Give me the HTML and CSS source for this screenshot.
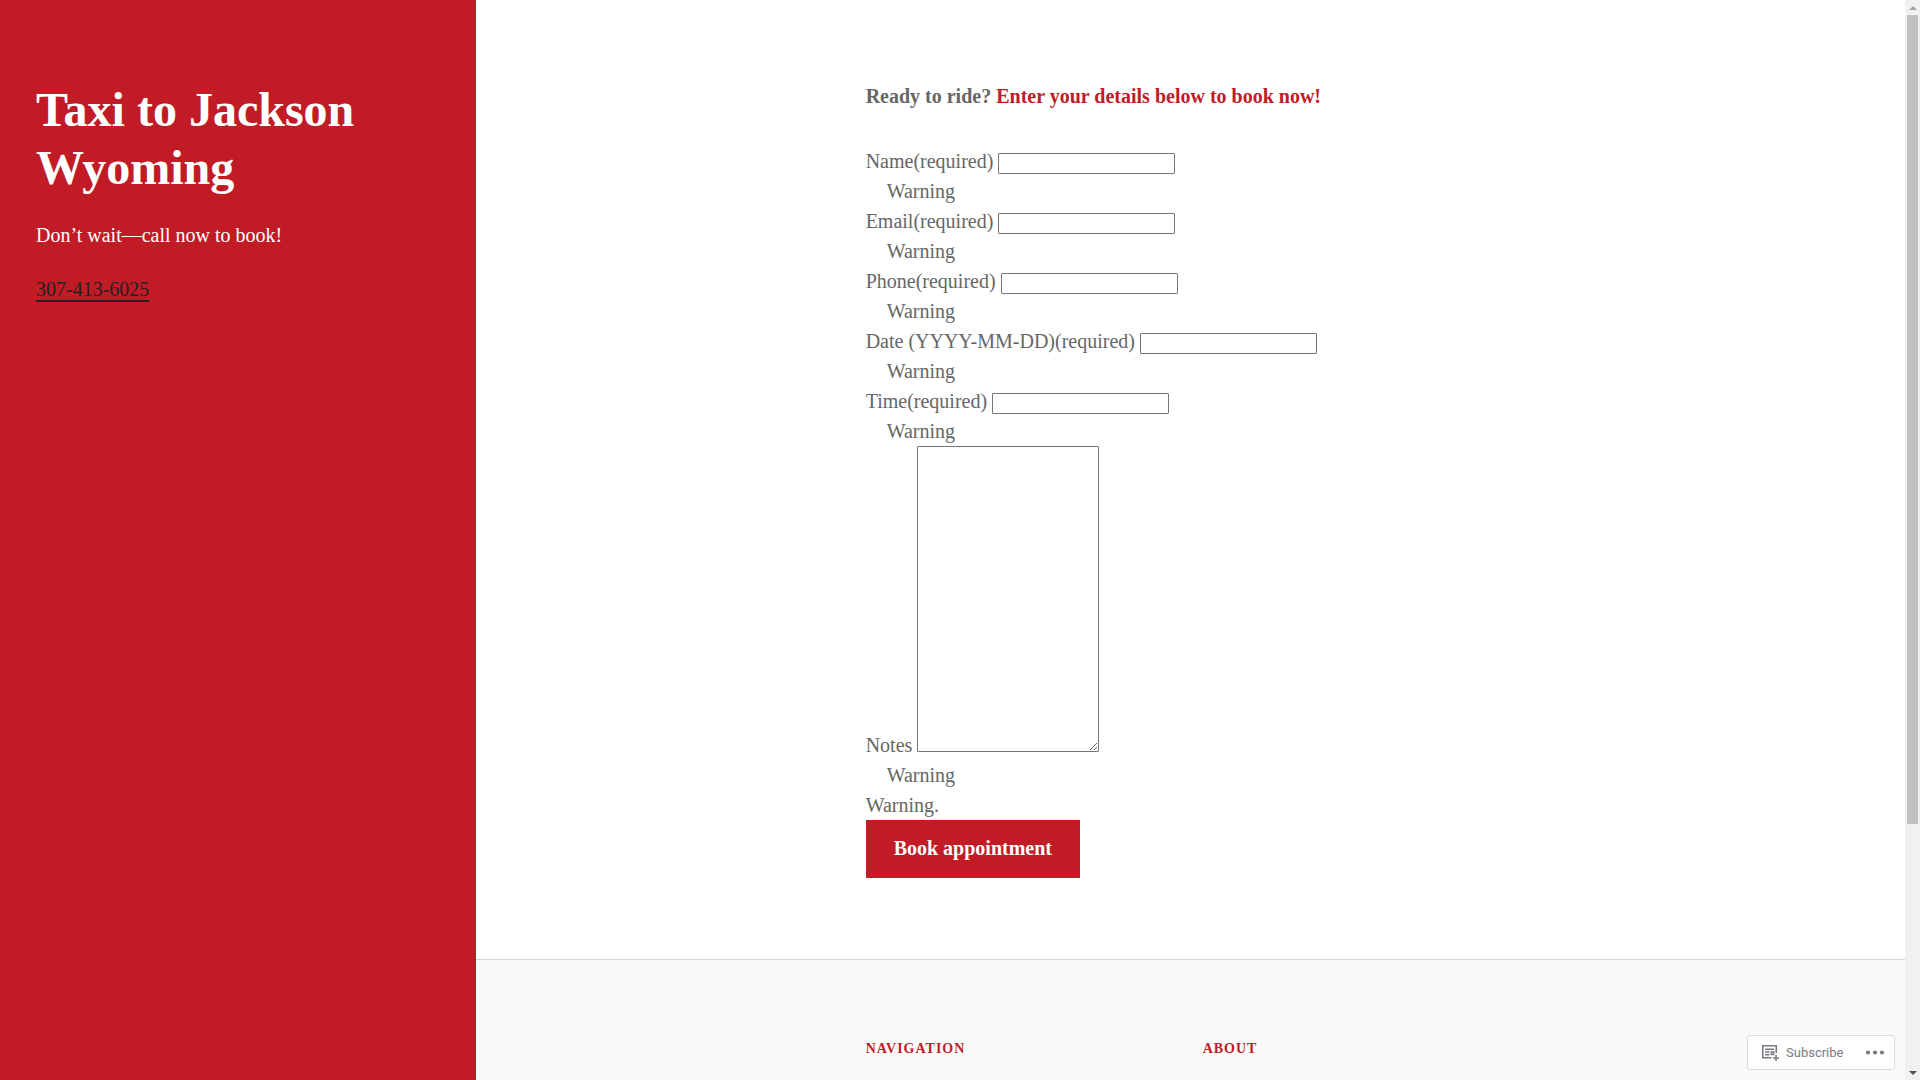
FILE: index.html
```html
<!DOCTYPE html>
<html lang="en">
<head>
	<meta charset="UTF-8">
	<meta name="viewport" content="width=device-width, initial-scale=1.0">
	<title>Taxi to Jackson Wyoming</title>
	<link rel="stylesheet" href="styles.css">
</head>
<body>

<div class="site">

	<header class="sidebar">
		<h1>Taxi to Jackson Wyoming</h1>
		<p>Don’t wait—call now to book!</p>
		<p><a href="tel:3074136025">307-413-6025</a></p>
	</header>

	<div class="content">

		<main class="booking">
			<div class="column">
				<p class="intro"><strong>Ready to ride? <span class="accent">Enter your details below to book now!</span></strong></p>

				<form>
					<div class="field">
						<label for="name">Name<span>(required)</span></label>
						<input type="text" id="name" name="name">
						<div class="field-error">Warning</div>
					</div>
					<div class="field">
						<label for="email">Email<span>(required)</span></label>
						<input type="email" id="email" name="email">
						<div class="field-error">Warning</div>
					</div>
					<div class="field">
						<label for="phone">Phone<span>(required)</span></label>
						<input type="tel" id="phone" name="phone">
						<div class="field-error">Warning</div>
					</div>
					<div class="field">
						<label for="date">Date (YYYY-MM-DD)<span>(required)</span></label>
						<input type="text" id="date" name="date">
						<div class="field-error">Warning</div>
					</div>
					<div class="field">
						<label for="time">Time<span>(required)</span></label>
						<input type="text" id="time" name="time">
						<div class="field-error">Warning</div>
					</div>
					<div class="field">
						<label for="notes">Notes</label>
						<textarea id="notes" name="notes" rows="20"></textarea>
						<div class="field-error">Warning</div>
					</div>
					<div class="form-error">Warning.</div>
					<button type="submit" class="button">Book appointment</button>
				</form>
			</div>
		</main>

		<footer class="footer">
			<div class="column footer-columns">
				<h2>Navigation</h2>
				<h2>About</h2>
			</div>
		</footer>

	</div>

</div>

<div class="scrollbar" aria-hidden="true">
	<span class="arrow arrow-up"></span>
	<span class="track"><span class="thumb"></span></span>
	<span class="arrow arrow-down"></span>
</div>

<div class="actionbar">
	<button type="button" class="subscribe">
		<svg width="18" height="19" viewBox="0 0 18 19" fill="none" stroke="currentColor">
			<path d="M10.500 14.750H1.750V2.750H15.250V10" stroke-width="1.600"/>
			<path d="M4 6.250H13M4 9H8.500M4 11.750H8.500" stroke-width="1.400"/>
			<path d="M15 12V18M12 15H18" stroke-width="1.600"/>
			<path d="M10.250 9H12.750V11.500H10.250Z" stroke-width="1.400"/>
		</svg>
		Subscribe
	</button>
	<button type="button" class="more" aria-label="More">
		<svg width="20" height="7" viewBox="0 0 20 7" fill="currentColor">
			<circle cx="3" cy="3.500" r="2.100"/>
			<circle cx="10" cy="3.500" r="2.100"/>
			<circle cx="17" cy="3.500" r="2.100"/>
		</svg>
	</button>
</div>

</body>
</html>
```
FILE: styles.css
```css
* {
	box-sizing: border-box;
}
body {
	display: flex;
	height: 100vh;
	margin: 0;
	font-family: "Liberation Serif", "Times New Roman", serif;
	font-size: 20px;
	line-height: 30px;
	color: #666;
	background: #fff;
}
h1, h2, p {
	margin: 0;
}
.site {
	display: grid;
	grid-template-columns: 1fr 3fr;
	flex: 1;
	overflow-y: auto;
	scrollbar-width: none;
}

/* sidebar */
.sidebar {
	padding: 81px 36px;
	background: #c11b26;
	color: #fff;
}
.sidebar h1 {
	margin-bottom: 23px;
	font-size: 48px;
	line-height: 58px;
}
.sidebar p {
	margin-bottom: 24px;
}
.sidebar a {
	color: #222;
	text-decoration: underline;
	text-decoration-thickness: 2px;
	text-underline-offset: 4px;
}

/* booking form */
.booking {
	padding: 81px 24px;
}
.column {
	max-width: 650px;
	margin: 0 auto;
}
.intro {
	margin-bottom: 35px;
}
.accent {
	color: #c11b26;
}
.field input,
.field textarea {
	border: 1px solid #767676;
	border-radius: 1px;
}
.field input {
	width: 177px;
	padding: 2px 3px;
}
.field-error {
	padding-left: 21px;
}
.button {
	display: block;
	padding: 13px 28px 15px;
	border: 0;
	background: #c11b26;
	color: #fff;
	font: inherit;
	font-weight: bold;
	cursor: pointer;
}

/* footer */
.footer {
	min-height: 444px;
	padding: 79px 24px;
	border-top: 1px solid #d6d6d6;
	background: #fafafa;
}
.footer-columns {
	display: grid;
	grid-template-columns: 1fr 1fr;
	gap: 24px;
}
.footer h2 {
	font-size: 14px;
	line-height: 20px;
	letter-spacing: 1px;
	text-transform: uppercase;
	color: #c11b26;
}

/* scrollbar */
.scrollbar {
	display: flex;
	flex-direction: column;
	align-items: center;
	width: 15px;
	background: #f1f1f1;
}
.arrow {
	display: flex;
	align-items: center;
	justify-content: center;
	height: 15px;
}
.arrow:before {
	content: "";
	border: 4px solid transparent;
}
.arrow-up:before {
	border-top: 0;
	border-bottom-color: #a3a3a3;
}
.arrow-down:before {
	border-bottom: 0;
	border-top-color: #505050;
}
.track {
	flex: 1;
}
.thumb {
	display: block;
	width: 11px;
	height: 77%;
	background: #c1c1c1;
}

/* floating bar */
.actionbar {
	position: fixed;
	right: 25px;
	bottom: 10px;
	display: flex;
	align-items: center;
	justify-content: space-between;
	width: 148px;
	height: 35px;
	padding: 0 9px 0 13px;
	border: 1px solid #dcdcde;
	border-radius: 3px;
	background: #fff;
}
.actionbar button {
	display: flex;
	align-items: center;
	gap: 7px;
	padding: 0;
	border: 0;
	background: none;
	color: #787c82;
	font-family: Roboto, sans-serif;
	font-size: 13px;
	cursor: pointer;
}
```
